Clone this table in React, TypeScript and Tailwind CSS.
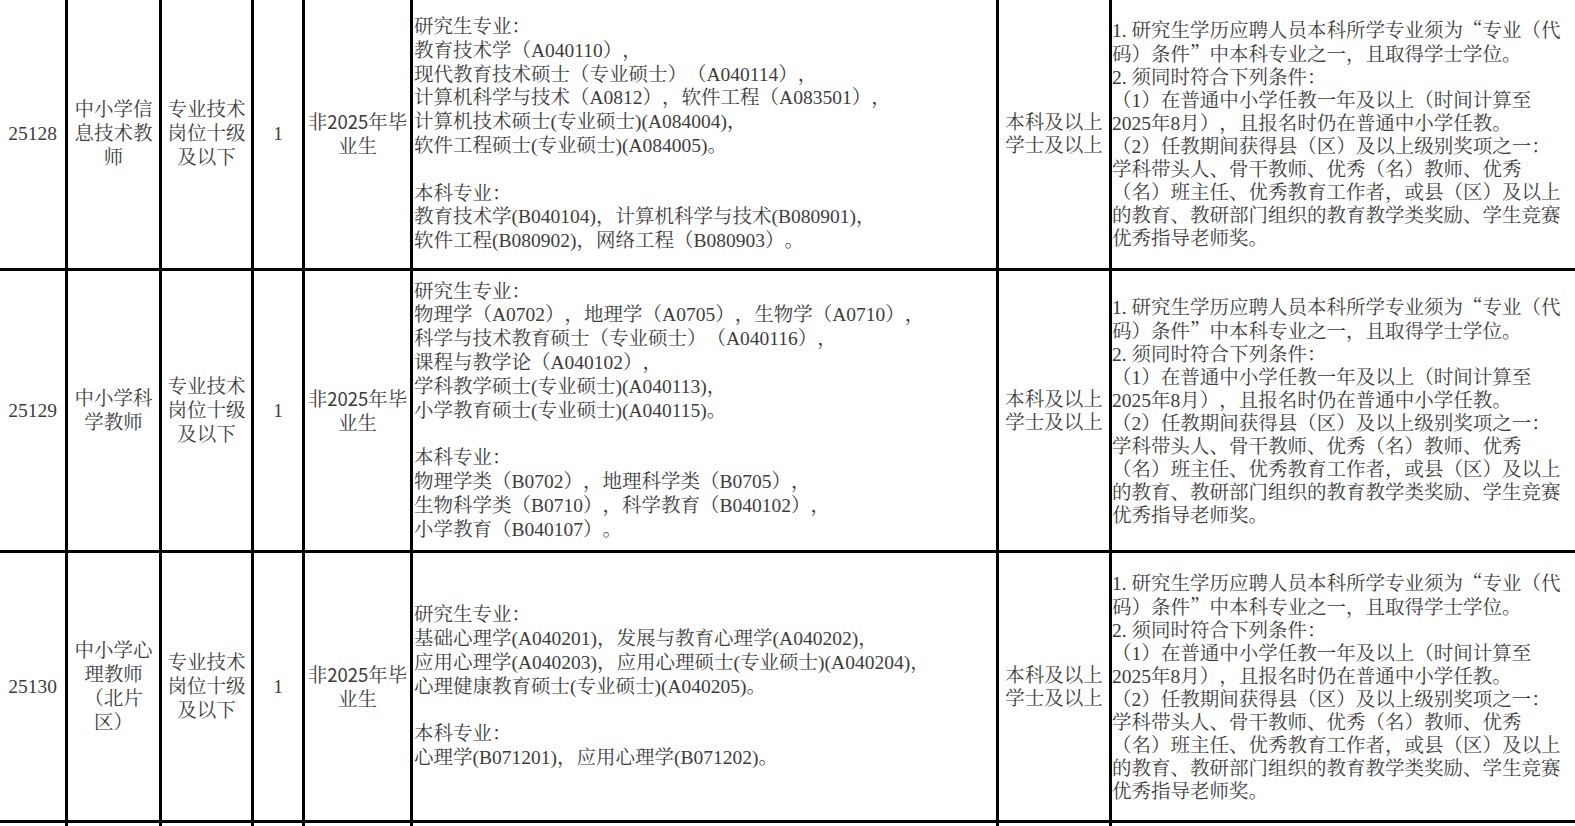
const FONT = '"Liberation Serif", "Noto Serif CJK SC", "Noto Sans CJK SC", serif';

type Row = {
  id: string;
  name: string[];
  level: string[];
  count: string;
  majors: string[];
  height: string;
};

const LEVEL = ["专业技术", "岗位十级", "及以下"];
const EDU = ["本科及以上", "学士及以上"];

const REQUIREMENTS: React.ReactNode[] = [
  <>
    1. 研究生学历应聘人员本科所学专业须为<span className="font-['Noto_Serif_CJK_SC']">“</span>专业（代
  </>,
  <>
    码）条件<span className="font-['Noto_Serif_CJK_SC']">”</span>中本科专业之一，且取得学士学位。
  </>,
  "2. 须同时符合下列条件：",
  "（1）在普通中小学任教一年及以上（时间计算至",
  "2025年8月），且报名时仍在普通中小学任教。",
  "（2）任教期间获得县（区）及以上级别奖项之一：",
  "学科带头人、骨干教师、优秀（名）教师、优秀",
  "（名）班主任、优秀教育工作者，或县（区）及以上",
  "的教育、教研部门组织的教育教学类奖励、学生竞赛",
  "优秀指导老师奖。",
];

const rows: Row[] = [
  {
    id: "25128",
    name: ["中小学信", "息技术教", "师"],
    level: LEVEL,
    count: "1",
    height: "h-[271px]",
    majors: [
      "研究生专业：",
      "教育技术学（A040110），",
      "现代教育技术硕士（专业硕士）（A040114），",
      "计算机科学与技术（A0812），软件工程（A083501），",
      "计算机技术硕士(专业硕士)(A084004)，",
      "软件工程硕士(专业硕士)(A084005)。",
      "",
      "本科专业：",
      "教育技术学(B040104)，计算机科学与技术(B080901)，",
      "软件工程(B080902)，网络工程（B080903）。",
    ],
  },
  {
    id: "25129",
    name: ["中小学科", "学教师"],
    level: LEVEL,
    count: "1",
    height: "h-[282px]",
    majors: [
      "研究生专业：",
      "物理学（A0702），地理学（A0705），生物学（A0710），",
      "科学与技术教育硕士（专业硕士）（A040116），",
      "课程与教学论（A040102），",
      "学科教学硕士(专业硕士)(A040113)，",
      "小学教育硕士(专业硕士)(A040115)。",
      "",
      "本科专业：",
      "物理学类（B0702），地理科学类（B0705），",
      "生物科学类（B0710），科学教育（B040102），",
      "小学教育（B040107）。",
    ],
  },
  {
    id: "25130",
    name: ["中小学心", "理教师", "（北片", "区）"],
    level: LEVEL,
    count: "1",
    height: "h-[270px]",
    majors: [
      "研究生专业：",
      "基础心理学(A040201)，发展与教育心理学(A040202)，",
      "应用心理学(A040203)，应用心理硕士(专业硕士)(A040204)，",
      "心理健康教育硕士(专业硕士)(A040205)。",
      "",
      "本科专业：",
      "心理学(B071201)，应用心理学(B071202)。",
    ],
  },
];

function Lines({ lines, leading = "leading-[24px]" }: { lines: React.ReactNode[]; leading?: string }) {
  return (
    <div className={leading}>
      {lines.map((l, i) => (
        <div key={i} className="whitespace-nowrap">
          {l || "\u00a0"}
        </div>
      ))}
    </div>
  );
}

function Cell({ className = "", children }: { className?: string; children?: React.ReactNode }) {
  return (
    <div className={`flex shrink-0 items-center border-r-[3px] border-black ${className}`}>
      {children}
    </div>
  );
}

function TableRow({ row }: { row: Row }) {
  return (
    <div className={`flex ${row.height} border-b-[3px] border-black`}>
      <Cell className="w-[68px] justify-center">{row.id}</Cell>
      <Cell className="w-[94px] justify-center text-center">
        <Lines lines={row.name} />
      </Cell>
      <Cell className="w-[92px] justify-center text-center">
        <Lines lines={row.level} />
      </Cell>
      <Cell className="w-[51px] justify-center">{row.count}</Cell>
      <Cell className="w-[108px] justify-center text-center">
        <div className="leading-[24px]">
          <div className="whitespace-nowrap">
            非<span className="font-['Noto_Sans_CJK_SC'] text-[18.5px]">2025</span>年毕
          </div>
          <div>业生</div>
        </div>
      </Cell>
      <Cell className="w-[586px] pl-[1px]">
        <Lines lines={row.majors} leading="leading-[23.8px]" />
      </Cell>
      <Cell className="w-[113px] justify-center text-center">
        <Lines lines={EDU} leading="leading-[23px]" />
      </Cell>
      <div className="flex flex-1 items-center">
        <Lines lines={REQUIREMENTS} leading="leading-[23px]" />
      </div>
    </div>
  );
}

export default function App() {
  return (
    <div
      className="h-[826px] w-[1575px] overflow-hidden bg-white text-[19.5px] text-[#3c3c3c] [text-spacing-trim:space-all]"
      style={{ fontFamily: FONT }}
    >
      {rows.map((r) => (
        <TableRow key={r.id} row={r} />
      ))}
      <div className="flex h-[40px]">
        <Cell className="w-[68px]" />
        <Cell className="w-[94px]" />
        <Cell className="w-[92px]" />
        <Cell className="w-[51px]" />
        <Cell className="w-[108px]" />
        <Cell className="w-[586px]" />
        <Cell className="w-[113px]" />
      </div>
    </div>
  );
}
